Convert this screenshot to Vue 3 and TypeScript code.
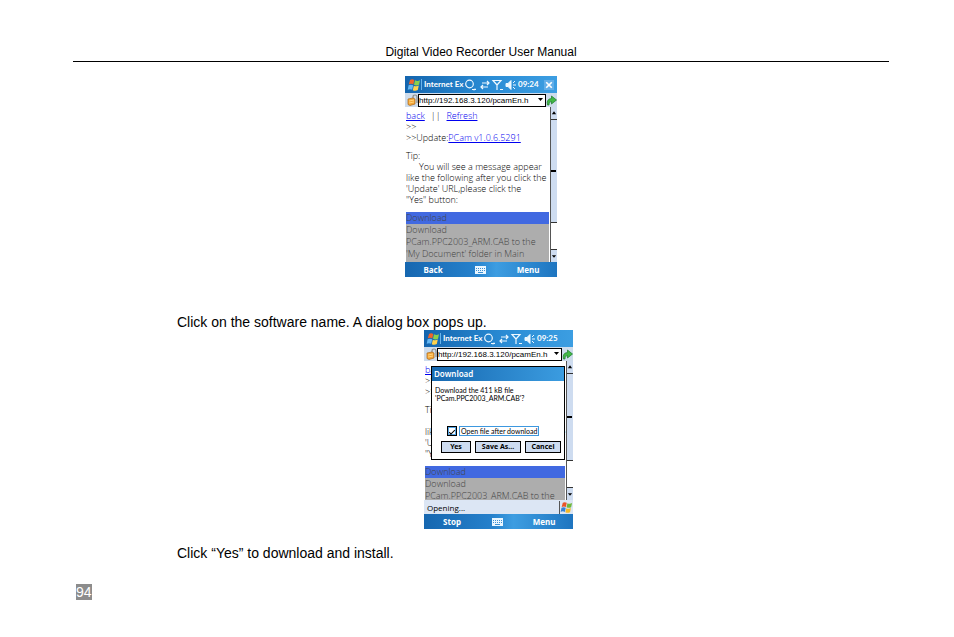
<script setup lang="ts">
interface Screen {
  id: string
  time: string
  closable: boolean
  left: string
  dialog: boolean
}

const browse: Screen = { id: 'browse', time: '09:24', closable: true, left: 'Back', dialog: false }
const download: Screen = { id: 'download', time: '09:25', closable: false, left: 'Stop', dialog: true }

const sections: { screen: Screen; caption: string }[] = [
  { screen: browse, caption: 'Click on the software name. A dialog box pops up.' },
  { screen: download, caption: 'Click “Yes” to download and install.' },
]
</script>

<template>
  <main class="page">
    <header class="head">Digital Video Recorder User Manual</header>

    <section v-for="{ screen, caption } in sections" :key="screen.id" :class="['step', screen.id]">
      <div class="figure">
        <div class="phone">
          <div class="titlebar">
            <svg class="flag" viewBox="0 0 14 14" aria-hidden="true">
              <path d="M3 2Q5 .5 7.300 2L6.300 6.500Q4 5.200 1.800 6.500Z" fill="#f0642c" />
              <path d="M8 2.300Q10.500 3.500 13 2.200L12 6.700Q9.500 8 7 6.800Z" fill="#8bd04b" />
              <path d="M1.600 7.300Q4 6 6.200 7.300L5.200 11.800Q3 10.500 .7 11.800Z" fill="#65b8f4" />
              <path d="M6.800 7.700Q9.300 8.900 11.800 7.600L10.800 12.100Q8.300 13.400 5.800 12.200Z" fill="#ffd34c" />
            </svg>
            <span class="app">Internet Ex</span>
            <svg class="status" viewBox="0 0 53 14" fill="none" stroke="#eef8ff" aria-hidden="true">
              <circle cx="4.500" cy="6" r="3.800" stroke-width="1.200" />
              <path d="M7 11.500h4M10 10.500l-1 2" />
              <path d="M17 5h7M22 3l2 2-2 2M23 9h-7M18 7l-2 2 2 2" stroke-width="1.200" />
              <path d="M28 2.500h8L32 7zM32 6v6M35 11.500h3" stroke-width="1.200" />
              <path d="M41 5.500h2l3-3v9l-3-3h-2z" fill="#eef8ff" />
              <path d="M48 5l2-2M48 7h3M48 9l2 2" />
            </svg>
            <span class="time">{{ screen.time }}</span>
            <button v-if="screen.closable" class="close" aria-label="Close">
              <svg viewBox="0 0 9 9"><path d="M2 2l5 5M7 2l-5 5" stroke="#fff" stroke-width="1.500" /></svg>
            </button>
          </div>

          <div class="addressbar">
            <svg class="lock" viewBox="0 0 11 12" aria-hidden="true">
              <path d="M6 5V3q0-2 2-2t2 2v6" fill="none" stroke="#8d8d88" stroke-width="1.200" />
              <path d="M1 5l5-1 2 1v5l-5 1.500-2-1z" fill="#f5a637" stroke="#a9681d" stroke-width=".7" />
              <path d="M2 7l5-1M2 9l5-1" stroke="#ffd57e" />
            </svg>
            <div class="field">
              <input class="url" type="text" aria-label="Address" value="http://192.168.3.120/pcamEn.h" />
              <button class="drop" aria-label="Show addresses">
                <svg viewBox="0 0 7 4"><path d="M1 0h5L3.500 3z" fill="#000" /></svg>
              </button>
            </div>
            <button class="go" aria-label="Go">
              <svg viewBox="0 0 11 11">
                <path d="M1.500 10Q0 4 5.500 3.500V1l5 4-5 4V6.500Q2.500 6.500 3 10z" fill="#42b845" stroke="#187b2a" stroke-width=".7" />
              </svg>
            </button>
          </div>

          <div class="view">
            <article class="doc">
              <p><a href="#back">back</a><span class="bars">||</span><a href="#refresh">Refresh</a></p>
              <p>&gt;&gt;</p>
              <p>&gt;&gt;Update:<a href="#pcam">PCam v1.0.6.5291</a></p>
              <div class="tip">
                <p>Tip:</p>
                <p class="indent">You will see a message appear</p>
                <p>like the following after you click the</p>
                <p>'Update' URL,please click the</p>
                <p>"Yes" button:</p>
              </div>
              <div class="sample">
                <p class="bar">Download</p>
                <p>Download</p>
                <p>PCam.PPC2003_ARM.CAB to the</p>
                <p>'My Document' folder in Main</p>
                <p>Memory?</p>
              </div>
            </article>
            <div class="scroll" aria-hidden="true">
              <svg class="arrow" viewBox="0 0 7 12"><path d="M1 7.500h5L3.500 4z" fill="#000" /></svg>
              <div class="track"><i class="grip"></i></div>
              <div class="rest"></div>
              <svg class="arrow" viewBox="0 0 7 12"><path d="M1 5h5L3.500 8z" fill="#000" /></svg>
            </div>

            <form v-if="screen.dialog" class="dialog" @submit.prevent>
              <h2>Download</h2>
              <p class="ask">Download the 411 kB file<br />'PCam.PPC2003_ARM.CAB'?</p>
              <div class="check">
                <input id="open-after" type="checkbox" checked />
                <label for="open-after">Open file after download</label>
              </div>
              <div class="actions">
                <button>Yes</button>
                <button class="wide">Save As...</button>
                <button>Cancel</button>
              </div>
            </form>
          </div>

          <div v-if="screen.dialog" class="progress">
            <span>Opening...</span>
            <svg class="busy" viewBox="0 0 14 14" aria-hidden="true">
              <path d="M3 2Q5 .5 7.300 2L6.300 6.500Q4 5.200 1.800 6.500Z" fill="#e95427" />
              <path d="M8 2.300Q10.500 3.500 13 2.200L12 6.700Q9.500 8 7 6.800Z" fill="#70b83c" />
              <path d="M1.600 7.300Q4 6 6.200 7.300L5.200 11.800Q3 10.500 .7 11.800Z" fill="#3781d4" />
              <path d="M6.800 7.700Q9.300 8.900 11.800 7.600L10.800 12.100Q8.300 13.400 5.800 12.200Z" fill="#f5b928" />
            </svg>
          </div>

          <div class="softkeys">
            <button>{{ screen.left }}</button>
            <button class="keyboard" aria-label="Keyboard">
              <svg viewBox="0 0 11 8">
                <path d="M0 0h11v8H0z" fill="#e9f6ff" />
                <path d="M1 2.500h9M1 4.500h9" stroke="#3e91d3" stroke-dasharray="1 1" />
                <path d="M3 6.500h5" stroke="#3e91d3" />
              </svg>
            </button>
            <button>Menu</button>
          </div>
        </div>
      </div>
      <p class="caption">{{ caption }}</p>
    </section>

    <footer><span class="number">94</span></footer>
  </main>
</template>

<style>
body {
  margin: 0;
  background: #fff;
}
</style>

<style scoped>
.page {
  padding: 44px 65px 36px 73px;
  font-family: "Liberation Sans", Arial, sans-serif;
  color: #000;
}
p,
h2 {
  margin: 0;
}
button,
input {
  box-sizing: border-box;
  margin: 0;
  padding: 0;
  border: 0;
  border-radius: 0;
  background: none;
  font: inherit;
  color: inherit;
}
svg {
  display: block;
  flex: none;
}
.head {
  padding-bottom: 1px;
  border-bottom: 1px solid #000;
  font-size: 12px;
  line-height: 16px;
  text-align: center;
}
.figure {
  display: flex;
  justify-content: center;
}
.browse {
  padding-top: 14px;
}
.browse .caption {
  padding-top: 37px;
}
.download .figure {
  padding-left: 35px;
}
.download .caption {
  padding-top: 16px;
}
.caption {
  padding-left: 104px;
  font-size: 14px;
  line-height: 16px;
}
footer {
  display: flex;
  padding: 23px 3px 0;
}
.number {
  background: #8c8c8c;
  color: #fff;
  font-size: 14px;
  line-height: 16px;
}

.phone {
  display: flex;
  flex-direction: column;
  width: 152px;
  font-family: "Open Sans", "Noto Sans", sans-serif;
  font-size: 9px;
  line-height: 11px;
}
.download .phone {
  width: 149px;
}
.titlebar {
  display: flex;
  align-items: center;
  height: 17px;
  background: linear-gradient(90deg, #1465ae, #2a8cd5 55%, #3c9ee2);
  color: #fff;
  font-size: 8px;
  font-weight: 700;
}
.flag {
  width: 14px;
  height: 14px;
  padding: 0 0 0 2px;
}
.app {
  width: 41px;
  padding-left: 2px;
  border-left: 1px solid #6bb5eb;
  font-family: Lato, sans-serif;
  white-space: nowrap;
}
.status {
  width: 53px;
  height: 14px;
}
.time {
  width: 26px;
  font-family: Lato, sans-serif;
}
.close {
  width: 10px;
  height: 10px;
  background: #62aee8;
}
.close svg {
  width: 10px;
  height: 10px;
}
.addressbar {
  display: flex;
  align-items: center;
  height: 14px;
  background: #cedcec;
}
.lock {
  width: 11px;
  height: 12px;
  padding: 0 0 0 2px;
}
.field {
  display: flex;
  flex: 1;
  box-sizing: border-box;
  min-width: 0;
  height: 13px;
  border: 1px solid #000;
  background: #fff;
}
.url {
  flex: 1;
  min-width: 0;
  height: 11px;
  font-family: "Liberation Sans", sans-serif;
  font-size: 8px;
}
.drop {
  display: grid;
  place-items: center;
  width: 9px;
}
.drop svg {
  width: 7px;
  height: 4px;
}
.go svg {
  width: 11px;
  height: 11px;
}
.view {
  position: relative;
  display: flex;
  height: 155px;
  background: #fff;
}
.download .view {
  height: 139px;
}
.doc {
  flex: 1;
  min-width: 0;
  padding: 3px 1px 0;
  overflow: hidden;
  color: #000;
  font-weight: 300;
  white-space: nowrap;
}
.doc a {
  color: #0000f0;
}
.bars {
  padding: 0 6px;
}
.tip {
  padding: 7px 0;
}
.indent {
  padding-left: 13px;
}
.sample {
  background: #adadad;
  color: #444;
  line-height: 12px;
}
.bar {
  background: #4169e1;
}
.scroll {
  display: flex;
  flex-direction: column;
  width: 6px;
  border-left: 1px solid #555;
  background: #cedcf0;
}
.arrow {
  width: 6px;
  height: 12px;
}
.track {
  display: flex;
  align-items: center;
  flex: 1;
  border: solid #333;
  border-width: 1px 0;
}
.grip {
  width: 5px;
  height: 2px;
  background: #000;
}
.rest {
  height: 26px;
  border-bottom: 1px solid #333;
  background: #fff;
}
.dialog {
  position: absolute;
  top: 5px;
  right: 8px;
  left: 7px;
  box-sizing: border-box;
  height: 94px;
  border: 1px solid #000;
  background: #fff;
  font-family: Lato, sans-serif;
  font-size: 7px;
  line-height: 8px;
}
.dialog h2 {
  padding-left: 2px;
  background: linear-gradient(90deg, #1769b1, #3b9ce0);
  color: #fff;
  font-family: "Noto Sans", sans-serif;
  font-size: 8px;
  font-weight: 600;
  line-height: 14px;
}
.ask {
  padding: 5px 3px 0;
}
.check {
  display: flex;
  align-items: center;
  gap: 2px;
  padding: 24px 0 0 15px;
}
.check input {
  appearance: none;
  display: grid;
  place-items: center;
  width: 10px;
  height: 10px;
  border: 1px solid #000;
  outline: 1px solid #55a5e4;
  outline-offset: -2px;
}
.check input:checked::before {
  content: "";
  box-sizing: border-box;
  width: 6px;
  height: 3px;
  border: solid #000;
  border-width: 0 0 1px 1px;
  transform: rotate(-45deg);
}
.check label {
  padding: 0 1px;
  border: 1px solid #3d98df;
}
.actions {
  display: flex;
  justify-content: space-between;
  padding: 5px 3px 0 9px;
}
.actions button {
  width: 30px;
  height: 12px;
  border: 1px solid #000;
  background: #cedcf0;
  font-family: "Noto Sans", sans-serif;
  font-weight: 700;
}
.actions button:last-child {
  width: 36px;
}
.actions .wide {
  width: 46px;
}
.progress {
  display: flex;
  align-items: center;
  justify-content: space-between;
  height: 14px;
  padding-left: 3px;
  background: #dce6f4;
  font-size: 8px;
}
.busy {
  width: 13px;
  height: 13px;
  border-left: 1px solid #555;
}
.softkeys {
  display: grid;
  grid-template-columns: 56px 1fr 58px;
  height: 15px;
  background: linear-gradient(90deg, #1667b0, #2580cb 45%, #3d9de1 60%, #1e75c0);
  color: #fff;
  font-family: "Noto Sans", sans-serif;
  font-size: 8px;
  font-weight: 700;
}
.keyboard {
  display: grid;
  place-items: center;
}
.keyboard svg {
  width: 11px;
  height: 8px;
}
</style>
